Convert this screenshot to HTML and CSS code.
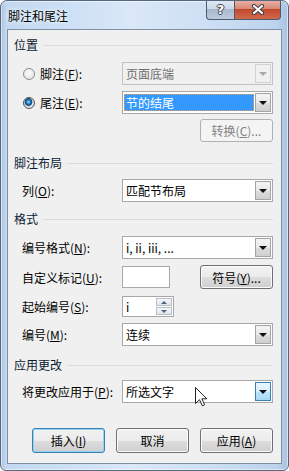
FILE: index.html
```html
<!DOCTYPE html>
<html lang="zh-CN">
<head>
<meta charset="utf-8">
<title>脚注和尾注</title>
<link rel="stylesheet" href="styles.css">
</head>
<body>
<div class="window">
  <div class="titlebar">
    <span class="title">脚注和尾注</span>
    <div class="caps">
      <div class="cap help"><span>?</span></div>
      <div class="cap close">
        <svg width="14" height="11" viewBox="0 0 14 11"><path d="M3 2 L11 9 M11 2 L3 9" stroke="#3a3f47" stroke-width="4.2" stroke-linecap="round"/><path d="M3 2 L11 9 M11 2 L3 9" stroke="#fff" stroke-width="2.2" stroke-linecap="round"/></svg>
      </div>
    </div>
  </div>
  <div class="client">
    <div class="gh m8"><span>位置</span></div>
    <div class="row rad m10">
      <span class="radio"></span><label>脚注(<u>F</u>):</label>
      <div class="combo dis"><span class="val">页面底端</span><span class="arrow"></span></div>
    </div>
    <div class="row rad m6">
      <span class="radio on"></span><label>尾注(<u>E</u>):</label>
      <div class="combo"><span class="val sel">节的结尾</span><span class="arrow"></span></div>
    </div>
    <div class="row end m5">
      <div class="btn dis">转换(<u>C</u>)...</div>
    </div>

    <div class="gh m14"><span>脚注布局</span></div>
    <div class="row m9">
      <label>列(<u>O</u>):</label>
      <div class="combo"><span class="val">匹配节布局</span><span class="arrow"></span></div>
    </div>

    <div class="gh m10"><span>格式</span></div>
    <div class="row m10">
      <label>编号格式(<u>N</u>):</label>
      <div class="combo"><span class="val">i, ii, iii, ...</span><span class="arrow"></span></div>
    </div>
    <div class="row tall m6">
      <label>自定义标记(<u>U</u>):</label>
      <div class="input"></div>
      <div class="btn push">符号(<u>Y</u>)...</div>
    </div>
    <div class="row short m7">
      <label>起始编号(<u>S</u>):</label>
      <div class="spin"><span class="val">i</span><span class="spinbtns"><span class="sb up"></span><span class="sb down"></span></span></div>
    </div>
    <div class="row m6">
      <label>编号(<u>M</u>):</label>
      <div class="combo"><span class="val">连续</span><span class="arrow"></span></div>
    </div>

    <div class="gh m12"><span>应用更改</span></div>
    <div class="row m8">
      <label>将更改应用于(<u>P</u>):</label>
      <div class="combo"><span class="val">所选文字</span><span class="arrow hot"></span></div>
    </div>

    <div class="row end buttons m25">
      <div class="btn def">插入(<u>I</u>)</div>
      <div class="btn">取消</div>
      <div class="btn">应用(<u>A</u>)</div>
    </div>
  </div>
  <svg class="cursor" width="13" height="20" viewBox="0 0 13 20"><path d="M0.5 0.5 L0.5 16.5 L4.5 12.7 L7.3 18.8 L9.6 17.8 L6.9 11.8 L11.8 11.8 Z" fill="#fff" stroke="#222" stroke-width="1" stroke-linejoin="round"/></svg>
</div>
</body>
</html>
```

FILE: styles.css
```css
* { box-sizing: border-box; }
html, body { margin: 0; padding: 0; background: #fff; }
body {
  font-family: "Noto Sans CJK SC", "Microsoft YaHei", sans-serif;
  font-size: 12px;
  color: #000;
}
u { text-decoration: underline; text-underline-offset: 1px; }

.window {
  position: relative;
  width: 289px;
  height: 471px;
  border: 1px solid #56687f;
  border-radius: 7px 7px 6px 6px;
  background: linear-gradient(to right, #a9c2e0 0, #c3d8f0 5px, #cde0f5 25%, #dae8f7 45%, #cfe0f4 70%, #bcd3ed 96%, #a9c2e0 100%);
  box-shadow: inset 0 0 0 1px rgba(255,255,255,.55);
  display: flex;
  flex-direction: column;
  overflow: hidden;
}

.titlebar {
  flex: none;
  height: 28px;
  display: flex;
  align-items: flex-start;
}
.title {
  padding: 7px 0 0 7px;
  line-height: 16px;
  color: #000;
  text-shadow: 0 0 5px #f2f8ff, 0 0 3px #f2f8ff;
}
.caps {
  margin-left: auto;
  margin-right: 7px;
  margin-top: -1px;
  display: flex;
}
.cap {
  height: 20px;
  border: 1px solid #4b5b70;
  border-top: 0;
  display: flex;
  align-items: center;
  justify-content: center;
}
.help {
  width: 28px;
  border-right: 0;
  border-radius: 0 0 0 4px;
  background: linear-gradient(#e2eaf3 0, #cdd9e7 45%, #a8b9ce 50%, #bccbdc 100%);
}
.help span {
  font-family: "DejaVu Sans", sans-serif;
  font-weight: bold;
  font-size: 13px;
  color: #fff;
  line-height: 14px;
  text-shadow: 1px 0 0 #3a3f47, -1px 0 0 #3a3f47, 0 1px 0 #3a3f47, 0 -1px 0 #3a3f47;
}
.close {
  width: 47px;
  border-radius: 0 0 4px 0;
  background: linear-gradient(#ebb4a8 0, #d98a77 45%, #c3492e 50%, #d06a4d 100%);
}
.close svg { display: block; }

.client {
  flex: none;
  height: 435px;
  margin: 0 6px;
  background: #f0f0f0;
  border: 1px solid #7f90a5;
  padding: 0 8px 0 6px;
  display: flex;
  flex-direction: column;
}

.m5 { margin-top: 5px; }
.m6 { margin-top: 6px; }
.m7 { margin-top: 7px; }
.m8 { margin-top: 8px; }
.m9 { margin-top: 9px; }
.m10 { margin-top: 10px; }
.m12 { margin-top: 12px; }
.m14 { margin-top: 14px; }
.m25 { margin-top: 25px; }

.gh {
  flex: none;
  display: flex;
  align-items: center;
  gap: 5px;
  height: 14px;
  line-height: 14px;
  color: #0b1a33;
}
.gh::after {
  content: "";
  flex: 1;
  height: 1px;
  background: #d5dde5;
}

.row {
  flex: none;
  display: flex;
  align-items: center;
  height: 23px;
  padding-left: 8px;
}
.row.tall { height: 24px; }
.row.short { height: 21px; }
.row.rad { padding-left: 9px; }
.row label { flex: 0 0 100px; white-space: nowrap; }
.row.rad label { flex: 0 0 82px; }
.row.end { justify-content: flex-end; }
.row.buttons { height: 25px; gap: 11px; }

.radio {
  width: 12px;
  height: 12px;
  border-radius: 50%;
  border: 1px solid #8c8e90;
  background: radial-gradient(circle at 50% 40%, #fafafa 0, #ececec 60%, #d4d4d4 100%);
  margin-right: 5px;
  flex: none;
}
.radio.on {
  border-color: #4b5258;
  background: radial-gradient(circle at 45% 40%, #9fe0ff 0, #2d91d6 1.6px, #0d4f8c 3.2px, #3a4e60 3.6px, #dcdcdc 4.2px, #f2f2f2 100%);
}

.combo {
  width: 151px;
  height: 100%;
  border: 1px solid #a8a8a8;
  background: #fff;
  display: flex;
  align-items: stretch;
  flex: none;
}
.val {
  flex: 1;
  padding-left: 3px;
  line-height: 21px;
  white-space: nowrap;
}
.val.sel {
  margin: 2px 1px 2px 1px;
  padding-left: 1px;
  line-height: 15px;
  background: #3399ff;
  color: #fff;
  border: 1px dotted #f0a050;
}
.arrow {
  width: 16px;
  margin: 1px 1px 1px 0;
  border: 1px solid #a4a4a4;
  background: linear-gradient(#f4f4f4 0, #e9e9e9 50%, #dcdcdc 51%, #d0d0d0 100%);
  display: flex;
  align-items: center;
  justify-content: center;
}
.arrow::after {
  content: "";
  border-left: 4px solid transparent;
  border-right: 4px solid transparent;
  border-top: 4px solid #111;
}
.arrow.hot {
  border-color: #3c7fb1;
  background: linear-gradient(#eaf6fd 0, #d9f0fc 50%, #bee6fd 51%, #a7d9f5 100%);
}
.combo.dis {
  background: #f0f0f0;
  border-color: #c2c2c2;
  color: #6d6d6d;
}
.combo.dis .arrow {
  border-color: #d2d2d2;
  background: #f0f0f0;
}
.combo.dis .arrow::after { border-top-color: #a8a8a8; }

.btn {
  width: 73px;
  height: 100%;
  flex: none;
  border: 1px solid #707070;
  border-radius: 3px;
  background: linear-gradient(#f2f2f2 0, #ebebeb 50%, #dddddd 51%, #cfcfcf 100%);
  box-shadow: inset 0 0 0 1px #fbfbfb;
  display: flex;
  align-items: center;
  justify-content: center;
  white-space: nowrap;
}
.btn.dis {
  border-color: #adb2b5;
  background: #f4f4f4;
  color: #838383;
  box-shadow: none;
}
.btn.def {
  border-color: #3c7fb1;
  box-shadow: inset 0 0 0 1px #8fd5f3;
}
.btn.push { margin-left: auto; }

.input {
  width: 48px;
  height: 22px;
  border: 1px solid #a8a8a8;
  background: #fff;
  flex: none;
}

.spin {
  width: 52px;
  height: 21px;
  border: 1px solid #a8a8a8;
  background: #fff;
  display: flex;
  flex: none;
}
.spin .val { line-height: 19px; }
.spinbtns {
  width: 16px;
  margin: 1px 1px 1px 0;
  display: flex;
  flex-direction: column;
  gap: 1px;
}
.sb {
  flex: 1;
  border: 1px solid #b9bfc7;
  background: linear-gradient(#f5f7fa, #dfe5ec);
  display: flex;
  align-items: center;
  justify-content: center;
}
.sb::after {
  content: "";
  border-left: 3px solid transparent;
  border-right: 3px solid transparent;
}
.sb.up::after { border-bottom: 3px solid #4f6580; }
.sb.down::after { border-top: 3px solid #4f6580; }

.cursor {
  position: absolute;
  left: 194px;
  top: 386px;
}
```
